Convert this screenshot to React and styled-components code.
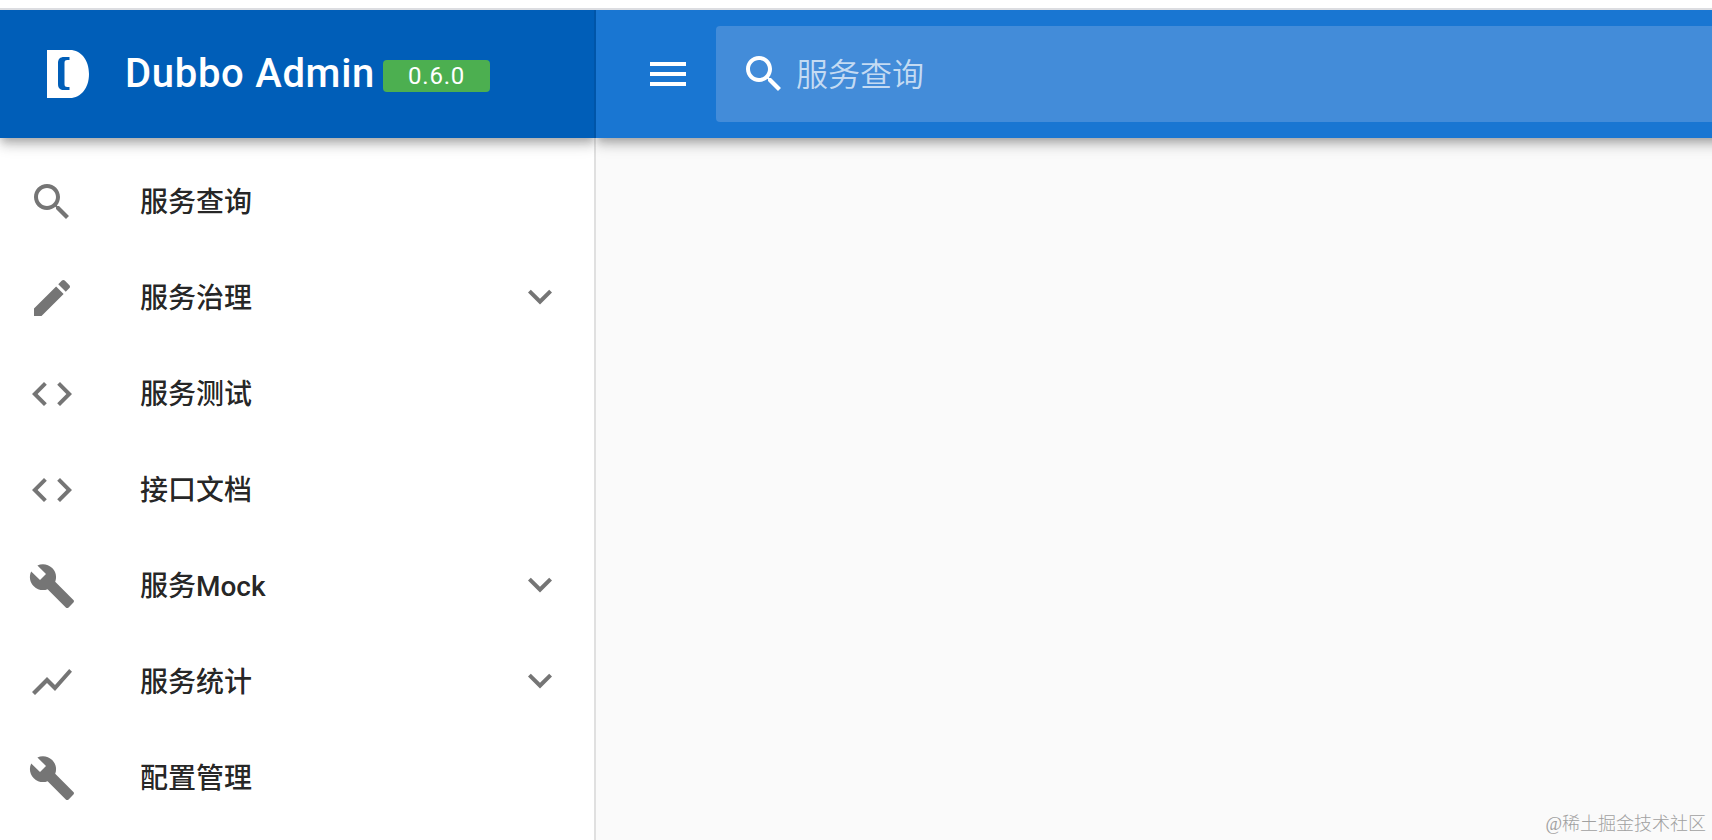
import React, { useState } from "react";
import styled, { createGlobalStyle } from "styled-components";

const icons = {
  search:
    "M15.5 14h-.79l-.28-.27C15.41 12.59 16 11.11 16 9.5 16 5.91 13.09 3 9.5 3S3 5.91 3 9.5 5.91 16 9.5 16c1.61 0 3.09-.59 4.23-1.57l.27.28v.79l5 4.99L20.49 19l-4.99-5zm-6 0C7.01 14 5 11.99 5 9.5S7.01 5 9.5 5 14 7.01 14 9.5 11.99 14 9.5 14z",
  edit: "M3 17.25V21h3.75L17.81 9.94l-3.75-3.75L3 17.25zM20.71 7.04c.39-.39.39-1.02 0-1.41l-2.34-2.34c-.39-.39-1.02-.39-1.41 0l-1.83 1.83 3.75 3.75 1.83-1.83z",
  code: "M9.4 16.6L4.8 12l4.6-4.6L8 6l-6 6 6 6 1.4-1.4zm5.2 0l4.6-4.6-4.6-4.6L16 6l6 6-6 6-1.4-1.4z",
  build:
    "M22.7 19l-9.1-9.1c.9-2.3.4-5-1.5-6.9-2-2-5-2.4-7.4-1.3L9 6 6 9 1.6 4.7C.4 7.1.9 10.1 2.9 12.1c1.9 1.9 4.6 2.4 6.9 1.5l9.1 9.1c.4.4 1 .4 1.4 0l2.3-2.3c.5-.4.5-1.1.1-1.4z",
  chart: "M3.5 18.49l6-6.01 4 4L22 6.92l-1.41-1.41-7.09 7.97-4-4L2 16.99z",
  down: "M7.41 7.84L12 12.42l4.59-4.58L18 9.25l-6 6-6-6z",
  menu: "M3 18h18v-2H3v2zm0-5h18v-2H3v2zm0-7v2h18V6H3z",
};

const menuData = [
  { id: 1, title: "服务查询", icon: "search" },
  { id: 2, title: "服务治理", icon: "edit", group: true },
  { id: 3, title: "服务测试", icon: "code" },
  { id: 4, title: "接口文档", icon: "code" },
  { id: 5, title: "服务Mock", icon: "build", group: true },
  { id: 6, title: "服务统计", icon: "chart", group: true },
  { id: 7, title: "配置管理", icon: "build" },
];

function Icon({ name }) {
  return (
    <IconSvg viewBox="0 0 24 24" aria-hidden="true">
      <path d={icons[name]} />
    </IconSvg>
  );
}

export default function App() {
  const [keyword, setKeyword] = useState("");

  return (
    <>
      <GlobalStyle />
      <Page>
        <Drawer>
          <Brand>
            <Logo viewBox="0 0 42 48" aria-hidden="true">
              <path
                fillRule="evenodd"
                d="M0 0H23C34 0 42 10 42 24S34 48 23 48H0ZM22.5 7H17C13 7 11 9 11 13V34C11 38 13 40 17 40H22.5V37H20.5C18 37 17.5 36 17.5 34V13C17.5 11 18 10 20.5 10H22.5Z"
              />
            </Logo>
            <Title>Dubbo Admin</Title>
            <Version>0.6.0</Version>
          </Brand>
          <Menu>
            {menuData.map((d) => (
              <MenuItem key={d.id}>
                <Icon name={d.icon} />
                <MenuTitle>{d.title}</MenuTitle>
                {d.group && <Icon name="down" />}
              </MenuItem>
            ))}
          </Menu>
        </Drawer>
        <Main>
          <Toolbar>
            <MenuButton aria-label="menu">
              <Icon name="menu" />
            </MenuButton>
            <SearchField>
              <Icon name="search" />
              <input
                value={keyword}
                placeholder="服务查询"
                onChange={(e) => setKeyword(e.target.value)}
              />
            </SearchField>
          </Toolbar>
          <Content>
            <Watermark>@稀土掘金技术社区</Watermark>
          </Content>
        </Main>
      </Page>
    </>
  );
}

const GlobalStyle = createGlobalStyle`
  * {
    box-sizing: border-box;
  }
  body {
    margin: 0;
    overflow: hidden;
    font-family: Roboto, "Noto Sans CJK SC", sans-serif;
    color: rgba(0, 0, 0, 0.87);
  }
`;

const Page = styled.div`
  display: flex;
  height: 840px;
  padding-top: 8px;
  overflow: hidden;
  background-color: #fff;
`;

const Drawer = styled.aside`
  display: flex;
  flex-direction: column;
  width: 596px;
  border-top: 2px solid #dcdde1;
  background-color: #fff;
`;

const Bar = styled.div`
  display: flex;
  flex-shrink: 0;
  align-items: center;
  height: 128px;
  color: #fff;
  box-shadow: 0 4px 8px -2px rgba(0, 0, 0, 0.2),
    0 8px 10px 0 rgba(0, 0, 0, 0.14), 0 2px 20px 0 rgba(0, 0, 0, 0.12);
  clip-path: inset(0 0 -40px 0);
`;

const Brand = styled(Bar)`
  padding-left: 47px;
  border-right: 2px solid #0055a8;
  background-color: #005eb8;
`;

const Logo = styled.svg`
  width: 42px;
  height: 48px;
  margin-right: 36px;
  fill: #fff;
`;

const Title = styled.div`
  font-size: 40px;
  font-weight: 500;
  line-height: 48px;
  letter-spacing: 0.7px;
`;

const Version = styled.span`
  width: 107px;
  height: 32px;
  margin: 4px 0 0 8px;
  border-radius: 4px;
  background-color: #4caf50;
  font-size: 24px;
  line-height: 32px;
  letter-spacing: 0.8px;
  text-align: center;
`;

const IconSvg = styled.svg`
  flex-shrink: 0;
  width: 48px;
  height: 48px;
  fill: currentColor;
`;

const Menu = styled.ul`
  flex: 1;
  margin: 0;
  padding: 16px 0 0;
  border-right: 2px solid #e0e0e0;
  list-style: none;
`;

const MenuItem = styled.li`
  display: flex;
  align-items: center;
  height: 96px;
  padding: 0 30px 0 28px;

  svg {
    color: #757575;
  }
`;

const MenuTitle = styled.span`
  flex: 1;
  padding: 2px 0 0 64px;
  font-size: 28px;
  font-weight: 500;
  line-height: 40px;
`;

const Main = styled.main`
  display: flex;
  flex: 1;
  flex-direction: column;
  min-width: 0;
  border-top: 2px solid #dcdde1;
  background-color: #fafafa;
`;

const Toolbar = styled(Bar)`
  margin-right: -24px;
  padding-left: 48px;
  background-color: #1976d2;
`;

const MenuButton = styled.button`
  display: flex;
  margin-right: 24px;
  padding: 0;
  border: 0;
  color: #fff;
  background-color: transparent;
`;

const SearchField = styled.label`
  display: flex;
  flex: 1;
  align-items: center;
  height: 96px;
  padding-left: 24px;
  border-radius: 4px 0 0 4px;
  background-color: #438cd9;

  input {
    flex: 1;
    margin-left: 8px;
    padding: 1px 0 0;
    border: 0;
    outline: 0;
    color: #fff;
    background-color: transparent;
    font-family: inherit;
    font-size: 32px;
    font-weight: 350;
  }
  input::placeholder {
    color: rgba(255, 255, 255, 0.7);
  }
`;

const Content = styled.section`
  display: flex;
  flex: 1;
  align-items: flex-end;
  justify-content: flex-end;
  padding: 0 6px 3px 0;
`;

const Watermark = styled.span`
  color: #a0a0a0;
  font-family: "Liberation Serif", "Noto Sans CJK SC", serif;
  font-size: 18px;
  font-weight: 300;
  line-height: 26px;
`;
